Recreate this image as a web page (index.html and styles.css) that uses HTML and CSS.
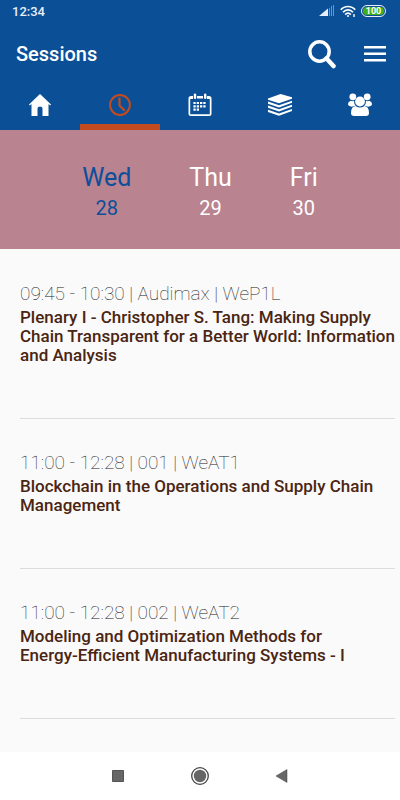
FILE: index.html
```
<!DOCTYPE html>
<html lang="en">
<head>
    <meta charset="UTF-8">
    <meta name="viewport" content="width=device-width, initial-scale=1.0">
    <title>Sessions</title>
    <link rel="stylesheet" href="styles.css">
</head>
<body>
    <header class="header">
        <div class="status-bar">
            <span>12:34</span>
            <div class="status-icons">
                <svg width="16" height="12" viewBox="0 0 16 12" fill="#fff">
                    <path d="M0 11l9-7.500V11z" opacity=".9"/>
                    <path d="M10 11h1V2.700l-1 .8zM12 11h1V1h-1zM14 11h1V0h-1z" opacity=".4"/>
                </svg>
                <svg width="16" height="13" viewBox="0 0 16 13" fill="none" stroke="#fff" stroke-width="1.700">
                    <path d="M.8 4.800C4.500.4 11.500.4 15.200 4.800M3 7.300c2.800-3.300 7.200-3.300 10 0M5.200 9.600c1.600-1.900 4-1.900 5.600 0"/>
                    <circle cx="8" cy="11" r="1" fill="#fff" stroke="none"/>
                    <path d="M13 10.500h2" opacity=".7" stroke-width="3"/>
                </svg>
                <span class="battery">100</span>
            </div>
        </div>

        <div class="title-bar">
            <h1>Sessions</h1>
            <button type="button" class="icon-btn" aria-label="Search">
                <svg width="28" height="30" viewBox="0 0 28 30" fill="none" stroke="#fff">
                    <circle cx="11.500" cy="12.500" r="9.700" stroke-width="3.500"/>
                    <path d="M18.500 19.500l7 7.500" stroke-width="4.500" stroke-linecap="round"/>
                </svg>
            </button>
            <button type="button" class="icon-btn" aria-label="Menu">
                <svg width="22" height="16" viewBox="0 0 22 16" fill="#fff">
                    <path d="M0 0h22v2.600H0zM0 6.500h22v2.600H0zM0 13h22v2.600H0z"/>
                </svg>
            </button>
        </div>

        <nav class="tabs">
            <a href="#home" class="tab" aria-label="Home">
                <svg width="24" height="24" viewBox="0 0 24 24" fill="currentColor">
                    <path d="M12 1L1 11.500l.8 1L3.500 11v12h6v-7.500Q9.500 13.500 12 13.500t2.500 2V23h6V11l1.700 1.500.8-1z"/>
                </svg>
            </a>
            <a href="#sessions" class="tab active" aria-label="Sessions">
                <svg width="24" height="24" viewBox="0 0 24 24" fill="none" stroke="currentColor">
                    <circle cx="12" cy="12" r="9.900" stroke-width="2"/>
                    <path d="M11.500 4.500v8l5.300 5.300" stroke-width="2.200"/>
                </svg>
            </a>
            <a href="#calendar" class="tab" aria-label="Calendar">
                <svg width="24" height="24" viewBox="0 0 24 24" fill="currentColor">
                    <path d="M5 3H3Q.5 3 .5 5.500v15Q.5 23 3 23h18q2.500 0 2.500-2.500v-15Q23.500 3 21 3h-2v3h2.800v15.300H2.200V6H5zM9 3h6v2.500H9z"/>
                    <rect x="5.800" y="0.500" width="2.400" height="5.500" rx="1.200"/>
                    <rect x="16" y="0.500" width="2.400" height="5.500" rx="1.200"/>
                    <path d="M8.700 9H11v2.100H8.700zM12 9h2.300v2.100H12zM15.300 9h2.300v2.100h-2.300zM5.400 12.300h2.300v2.100H5.400zM8.700 12.300H11v2.100H8.700zM12 12.300h2.300v2.100H12zM15.300 12.300h2.300v2.100h-2.300zM5.400 9h2.300v2.100H5.400zM5.400 15.600h2.300v2.100H5.400zM8.700 15.600H11v2.100H8.700z"/>
                </svg>
            </a>
            <a href="#papers" class="tab" aria-label="Papers">
                <svg width="26" height="24" viewBox="0 0 26 24" fill="currentColor">
                    <path d="M1 5.500L13.500 1 25 4.300v1.400L12 10.200 1 6.700z"/>
                    <path d="M1 8.500l11 3.700 13-4.500v2.100L12 14.500 1 10.800zM1 12.500l11 3.700 13-4.500v2.100L12 18.500 1 14.800zM1 16.700l11 3.700 13-4.500V18l-13 4.700L1 19z"/>
                </svg>
            </a>
            <a href="#people" class="tab" aria-label="People">
                <svg width="26" height="24" viewBox="0 0 26 24" fill="currentColor">
                    <circle cx="5.800" cy="3.800" r="3.400"/>
                    <circle cx="20.200" cy="3.800" r="3.400"/>
                    <circle cx="13" cy="8.500" r="4.900"/>
                    <path d="M3.800 7.800Q5 8.500 7 7.800q-.2 3 1.800 5Q6 13.500 4.800 13.800 1 13 1 11q0-2.500 2.800-3.200zM22.200 7.800Q21 8.500 19 7.800q.2 3-1.800 5 2.800.7 4 1Q25 13 25 11q0-2.500-2.800-3.200z"/>
                    <path d="M8.500 13q4.500 3 9 0 4.500.5 4.500 7 0 3-3 3H7q-3 0-3-3 0-6.500 4.500-7z"/>
                </svg>
            </a>
        </nav>
    </header>

    <div class="days">
        <button type="button" class="day selected"><span class="day-name">Wed</span><span class="day-date">28</span></button>
        <button type="button" class="day"><span class="day-name">Thu</span><span class="day-date">29</span></button>
        <button type="button" class="day"><span class="day-name">Fri</span><span class="day-date">30</span></button>
    </div>

    <main class="sessions">
        <article class="session">
            <p class="session-time">09:45 - 10:30 | Audimax | WeP1L</p>
            <h2>Plenary I - Christopher S. Tang: Making Supply Chain Transparent for a Better World: Information and Analysis</h2>
        </article>
        <article class="session">
            <p class="session-time">11:00 - 12:28 | 001 | WeAT1</p>
            <h2>Blockchain in the Operations and Supply Chain Management</h2>
        </article>
        <article class="session">
            <p class="session-time">11:00 - 12:28 | 002 | WeAT2</p>
            <h2>Modeling and Optimization Methods for <span class="nowrap">Energy-Efficient</span> Manufacturing Systems - I</h2>
        </article>
    </main>

    <footer class="system-nav">
        <button type="button" class="nav-btn" aria-label="Recent apps">
            <svg width="20" height="20" viewBox="0 0 20 20" fill="#666">
                <path d="M4.500 4.500h11v11h-11z" stroke="#555"/>
            </svg>
        </button>
        <button type="button" class="nav-btn" aria-label="Home screen">
            <svg width="20" height="20" viewBox="0 0 20 20">
                <circle cx="10" cy="10" r="8.300" fill="none" stroke="#444" stroke-width="1.300"/>
                <circle cx="10" cy="10" r="6.200" fill="#666"/>
            </svg>
        </button>
        <button type="button" class="nav-btn" aria-label="Back">
            <svg width="20" height="20" viewBox="0 0 20 20">
                <path d="M4 10l11-6.500v13z" fill="#666" stroke="#444" stroke-width=".5"/>
            </svg>
        </button>
    </footer>
</body>
</html>
```
FILE: styles.css
```
* {
    margin: 0;
    padding: 0;
    box-sizing: border-box;
}

body {
    font-family: Roboto, sans-serif;
    background: #fafafa;
    color: #4a2512;
    min-height: 100vh;
    display: flex;
    flex-direction: column;
}

button {
    font-family: inherit;
    background: none;
    border: none;
    cursor: pointer;
}

svg {
    display: block;
}

.nowrap {
    white-space: nowrap;
}

.header {
    background: #0b5097;
    color: #fff;
}

.status-bar {
    display: flex;
    align-items: center;
    justify-content: space-between;
    height: 22px;
    padding: 0 14px 0 12px;
    font-size: 13px;
    font-weight: 500;
    color: #e8eef8;
}

.status-icons {
    display: flex;
    align-items: center;
    gap: 5px;
}

.battery {
    width: 25px;
    border: 1px solid #e8eef8;
    border-radius: 6px;
    background: #3faf1e;
    background-clip: content-box;
    padding: 1px;
    color: #fff;
    font-size: 9px;
    font-weight: 700;
    line-height: 8px;
    text-align: center;
}

.title-bar {
    display: flex;
    align-items: center;
    gap: 28px;
    height: 64px;
    padding: 0 14px 0 16px;
}

.title-bar h1 {
    flex: 1;
    font-size: 20px;
    font-weight: 500;
}

.tabs {
    display: flex;
    height: 44px;
}

.tab {
    flex: 1;
    display: flex;
    align-items: center;
    justify-content: center;
    color: #fff;
    border-bottom: 6px solid transparent;
}

.tab.active {
    color: #c44a1f;
    border-bottom-color: #c44a1f;
}

.days {
    display: flex;
    justify-content: center;
    gap: 58px;
    background: #b9838f;
    padding: 32px 0 27px;
}

.day {
    display: flex;
    flex-direction: column;
    align-items: center;
    color: #fff;
}

.day.selected {
    color: #0b4f9c;
}

.day-name {
    font-size: 25px;
    line-height: 32px;
}

.day-date {
    font-size: 20px;
    line-height: 28px;
}

.sessions {
    flex: 1;
    padding: 0 5px 0 20px;
}

.session {
    padding: 33px 0 53px;
    border-bottom: 1px solid #dcdcdc;
}

.session + .session {
    padding-top: 32px;
}

.session-time {
    margin-bottom: 2px;
    font-size: 19px;
    font-weight: 100;
    line-height: 24px;
    color: #222;
}

.session h2 {
    font-size: 17px;
    font-weight: 500;
    line-height: 19px;
}

.system-nav {
    display: flex;
    justify-content: center;
    gap: 62px;
    background: #fff;
    padding: 14px 0;
}
```
